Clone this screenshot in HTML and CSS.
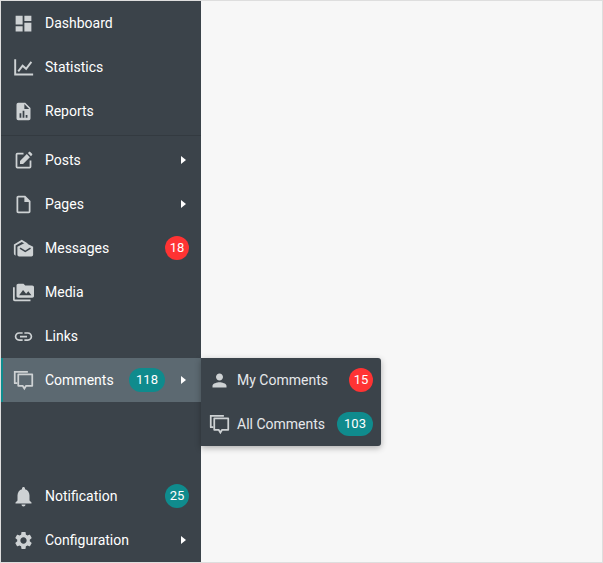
FILE: index.html

```html
<!DOCTYPE html>
<html lang="en">
<head>
  <meta charset="UTF-8" />
  <meta name="viewport" content="width=device-width, initial-scale=1.0"/>
  <title>Sidebar Menu</title>
  <link rel="stylesheet" href="styles.css">
</head>
<body>
  <div class="frame">
    <nav class="sidebar">
      <!-- Top group -->
      <a class="item">
        <svg class="icon" viewBox="0 0 24 24"><path d="M3 13h8V3H3v10zm0 8h8v-6H3v6zm10 0h8V11h-8v10zm0-18v6h8V3h-8z"/></svg>
        <span class="label">Dashboard</span>
      </a>
      <a class="item">
        <svg class="icon" viewBox="0 0 24 24"><path class="line" d="M2.500 2.500V20H23M6 16.500l5-6.500 4 3.500 6-8"/></svg>
        <span class="label">Statistics</span>
      </a>
      <a class="item">
        <svg class="icon" viewBox="0 0 24 24"><path fill-rule="evenodd" d="M6 2h8l6 6v12a2 2 0 0 1-2 2H6a2 2 0 0 1-2-2V4a2 2 0 0 1 2-2zm7 1.500V9h5.500zM7.500 14v5h2v-5zm3.500-3v8h2v-8zm3.500 5v3h2v-3z"/></svg>
        <span class="label">Reports</span>
      </a>
      <div class="divider"></div>

      <!-- Content group -->
      <a class="item">
        <svg class="icon" viewBox="0 0 24 24"><path d="M19 19H5V5h7V3H5a2 2 0 0 0-2 2v14a2 2 0 0 0 2 2h14a2 2 0 0 0 2-2v-7h-2z"/><path d="M8 16v-3.500l7.800-7.800 3.500 3.500-7.800 7.800zM17 3.500l1.300-1.300a1 1 0 0 1 1.400 0l2.100 2.100a1 1 0 0 1 0 1.400L20.500 7z"/></svg>
        <span class="label">Posts</span>
        <span class="arrow"></span>
      </a>
      <a class="item">
        <svg class="icon" viewBox="0 0 24 24"><path d="M14 2H6c-1.100 0-1.990.9-1.990 2L4 20c0 1.100.89 2 1.990 2H18c1.100 0 2-.9 2-2V8l-6-6zm4 18H6V4h7v5h5v11z"/></svg>
        <span class="label">Pages</span>
        <span class="arrow"></span>
      </a>
      <a class="item">
        <svg class="icon" viewBox="0 0 24 24"><path d="M1 7.500L10 2l7 4.300-2 1.200-5-3-7 4.200V20H4a3 3 0 0 1-3-3z"/><path fill-rule="evenodd" d="M5 10l9-4.500 9 4.500v9a2 2 0 0 1-2 2H7a2 2 0 0 1-2-2zm3.500.8l-1 1.500 6.500 4 6.500-4-1-1.500-5.500 3.400z"/></svg>
        <span class="label">Messages</span>
        <span class="badge red round">18</span>
      </a>
      <a class="item">
        <svg class="icon" viewBox="0 0 24 24"><path d="M2 6H0v5h.01L0 20c0 1.100.9 2 2 2h18v-2H2V6zm20-2h-8l-2-2H6c-1.100 0-1.990.9-1.990 2L4 16c0 1.100.9 2 2 2h16c1.100 0 2-.9 2-2V6c0-1.100-.9-2-2-2zM7 15l4.500-6 3.500 4.510 2.500-3.010L21 15H7z"/></svg>
        <span class="label">Media</span>
      </a>
      <a class="item">
        <svg class="icon" viewBox="0 0 24 24"><path d="M3.900 12c0-1.710 1.390-3.100 3.100-3.100h4V7H7c-2.760 0-5 2.240-5 5s2.240 5 5 5h4v-1.900H7c-1.710 0-3.100-1.390-3.100-3.100zM8 13h8v-2H8v2zm9-6h-4v1.900h4c1.710 0 3.100 1.390 3.100 3.100s-1.390 3.100-3.100 3.100h-4V17h4c2.760 0 5-2.240 5-5s-2.240-5-5-5z"/></svg>
        <span class="label">Links</span>
      </a>
      <div class="has-sub">
        <a class="item active">
          <svg class="icon" viewBox="0 0 24 24"><path d="M1 1h16v2H3v11h2v2H2a1 1 0 0 1-1-1z"/><path fill-rule="evenodd" d="M6 4h16a1 1 0 0 1 1 1v13a1 1 0 0 1-1 1h-6.500L13 23l-2.500-4H6a1 1 0 0 1-1-1V5a1 1 0 0 1 1-1zm1 2v11h4.600l1.400 2.200 1.400-2.200H21V6z"/></svg>
          <span class="label">Comments</span>
          <span class="badge teal">118</span>
          <span class="arrow"></span>
        </a>
        <div class="submenu">
          <a class="item">
            <svg class="icon" viewBox="0 0 24 24"><path d="M12 12c2.210 0 4-1.790 4-4s-1.790-4-4-4-4 1.790-4 4 1.790 4 4 4zm0 2c-2.670 0-8 1.340-8 4v2h16v-2c0-2.660-5.330-4-8-4z"/></svg>
            <span class="label">My Comments</span>
            <span class="badge red round">15</span>
          </a>
          <a class="item">
            <svg class="icon" viewBox="0 0 24 24"><path d="M1 1h16v2H3v11h2v2H2a1 1 0 0 1-1-1z"/><path fill-rule="evenodd" d="M6 4h16a1 1 0 0 1 1 1v13a1 1 0 0 1-1 1h-6.500L13 23l-2.500-4H6a1 1 0 0 1-1-1V5a1 1 0 0 1 1-1zm1 2v11h4.600l1.400 2.200 1.400-2.200H21V6z"/></svg>
            <span class="label">All Comments</span>
            <span class="badge teal">103</span>
          </a>
        </div>
      </div>

      <!-- Bottom group -->
      <div class="bottom">
        <a class="item">
          <svg class="icon" viewBox="1.500 1.500 21 21"><path d="M12 22c1.100 0 2-.9 2-2h-4c0 1.100.89 2 2 2zm6-6v-5c0-3.070-1.640-5.640-4.500-6.320V4c0-.83-.67-1.500-1.500-1.500s-1.500.67-1.500 1.500v.68C7.630 5.360 6 7.920 6 11v5l-2 2v1h16v-1l-2-2z"/></svg>
          <span class="label">Notification</span>
          <span class="badge teal round">25</span>
        </a>
        <a class="item">
          <svg class="icon" viewBox="0 0 24 24"><path d="M19.140 12.940c.04-.3.06-.61.06-.94 0-.32-.02-.64-.07-.94l2.030-1.580c.18-.14.23-.41.12-.61l-1.920-3.320c-.12-.22-.37-.29-.59-.22l-2.390.96c-.5-.38-1.030-.7-1.620-.94l-.36-2.540c-.04-.24-.24-.41-.48-.41h-3.840c-.24 0-.43.17-.47.41l-.36 2.540c-.59.24-1.130.57-1.620.94l-2.390-.96c-.22-.08-.47 0-.59.22L2.740 8.870c-.12.21-.08.47.12.61l2.030 1.580c-.05.3-.09.63-.09.94s.02.64.07.94l-2.030 1.580c-.18.14-.23.41-.12.61l1.920 3.320c.12.22.37.29.59.22l2.390-.96c.5.38 1.030.7 1.620.94l.36 2.540c.05.24.24.41.48.41h3.840c.24 0 .44-.17.47-.41l.36-2.540c.59-.24 1.130-.56 1.620-.94l2.390.96c.22.08.47 0 .59-.22l1.920-3.320c.12-.22.07-.47-.12-.61l-2.010-1.580zM12 15.600c-1.980 0-3.600-1.620-3.600-3.600s1.620-3.600 3.600-3.600 3.600 1.620 3.600 3.600-1.620 3.600-3.600 3.600z"/></svg>
          <span class="label">Configuration</span>
          <span class="arrow"></span>
        </a>
      </div>
    </nav>
  </div>
</body>
</html>
```

FILE: styles.css

```css
html, body {
  height: 100%;
}

body {
  margin: 0;
  font-family: Roboto, "Liberation Sans", sans-serif;
  font-size: 14px;
  font-weight: 450;
  background-color: #f7f7f7;
}

.frame {
  box-sizing: border-box;
  width: 603px;
  height: 563px;
  border: 1px solid #dedede;
  background-color: #f7f7f7;
  overflow: hidden;
}

.sidebar {
  display: flex;
  flex-direction: column;
  width: 200px;
  height: 100%;
  background-color: #3b434a;
}

.item {
  display: flex;
  align-items: center;
  height: 44px;
  padding: 0 12px 0 11.5px;
  color: #fff;
  cursor: pointer;
}

.item.active {
  background-color: #5c6971;
  box-shadow: inset 2px 0 0 #0f8b8d;
}

.icon {
  flex: none;
  width: 21px;
  height: 21px;
  margin-right: 11.5px;
  fill: #ced2d4;
}

.line {
  fill: none;
  stroke: #ced2d4;
  stroke-width: 2.2;
}

.label {
  flex: 1;
  white-space: nowrap;
}

.arrow {
  flex: none;
  width: 0;
  height: 0;
  margin: 0 3px 0 16px;
  border-top: 4px solid transparent;
  border-bottom: 4px solid transparent;
  border-left: 5px solid #fff;
}

.badge {
  flex: none;
  height: 24px;
  min-width: 36px;
  box-sizing: border-box;
  padding: 0 4px;
  border-radius: 12px;
  line-height: 24px;
  font-size: 13px;
  text-align: center;
  color: #fff;
}

.badge.round {
  min-width: 24px;
  width: 24px;
  padding: 0;
}

.badge.red {
  background-color: #ff3333;
}

.badge.teal {
  background-color: #0f8b8d;
}

.divider {
  height: 1px;
  margin: 2px 0;
  background-color: #333a40;
}

.has-sub {
  position: relative;
}

/* flyout next to Comments */
.submenu {
  position: absolute;
  left: 200px;
  top: 0;
  width: 180px;
  background-color: #3b434a;
  border-radius: 0 3px 3px 0;
  box-shadow: 0 2px 6px rgba(0,0,0,0.3);
}

.submenu .item {
  padding: 0 8px 0 7.5px;
}

.submenu .icon {
  margin-right: 7.5px;
}

.submenu .label {
  color: #e6e8ea;
}

.bottom {
  margin-top: auto;
}
```
